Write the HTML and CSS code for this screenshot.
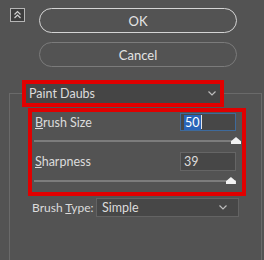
FILE: index.html
```html
<!DOCTYPE html>
<html lang="en">
<head>
  <meta charset="UTF-8">
  <title>Paint Daubs</title>
  <link rel="stylesheet" href="styles.css">
</head>
<body>
  <div class="dialog">
    <div class="top">
      <span class="collapse">
        <svg width="15" height="14" viewBox="0 0 15 14">
          <rect x="0.5" y="0.5" width="14" height="13" fill="#3d3d3d" stroke="#b5b5b5"/>
          <path d="M4.5 6.5 L7.5 3.5 L10.5 6.5 M4.5 10 L7.5 7 L10.5 10" fill="none" stroke="#d0d0d0" stroke-width="1.2"/>
        </svg>
      </span>
      <div class="buttons">
        <button class="btn btn-ok">OK</button>
        <button class="btn">Cancel</button>
      </div>
    </div>

    <div class="group">
      <div class="mark mark-select">
        <div class="select select-filter">
          <span>Paint Daubs</span>
          <svg class="chev" width="8" height="5" viewBox="0 0 8 5"><path d="M0.5 0.5 L4 4 L7.5 0.5" fill="none" stroke="#bdbdbd" stroke-width="1.2"/></svg>
        </div>
      </div>

      <div class="mark mark-params">
        <div class="param">
          <div class="param-row">
            <label><u>B</u>rush Size</label>
            <div class="field field-active"><span class="sel">50</span><span class="caret"></span></div>
          </div>
          <div class="slider"><span class="thumb" style="left: 100%"></span></div>
        </div>
        <div class="param">
          <div class="param-row">
            <label><u>S</u>harpness</label>
            <div class="field">39</div>
          </div>
          <div class="slider"><span class="thumb" style="left: 97.5%"></span></div>
        </div>
      </div>

      <div class="type-row">
        <label>Brush <u>T</u>ype:</label>
        <div class="select select-type">
          <span>Simple</span>
          <svg class="chev" width="8" height="5" viewBox="0 0 8 5"><path d="M0.5 0.5 L4 4 L7.5 0.5" fill="none" stroke="#bdbdbd" stroke-width="1.2"/></svg>
        </div>
      </div>
    </div>
  </div>
</body>
</html>
```

FILE: styles.css
```css
*{padding:0;margin:0;box-sizing:border-box}
body {
  background: #535353;
  font-family: Lato, "Open Sans", sans-serif;
  font-size: 12.5px;
  color: #dcdcdc;
}
label{white-space:nowrap}
.dialog{
  width:264px;
  height:260px;
  overflow:hidden;
  display:flex;
  flex-direction:column;
}
.top{
  display:flex;
  padding-top:8px;
}
.collapse{
  display:block;
  width:15px;
  height:14px;
  margin-left:10px;
}
.collapse svg{display:block}
.buttons{
  display:flex;
  flex-direction:column;
  gap:9px;
  margin-left:14px;
  width:198px;
}
.btn{
  height:25px;
  border-radius:13px;
  border:1px solid #7b7b7b;
  background:transparent;
  color:#e4e4e4;
  font-family:inherit;
  font-size:13px;
}
.btn-ok{
  border:1.5px solid #d4d4d4;
}

/* group frame */
.group{
  flex:1;
  margin:26px 2px 0 9px;
  border:1px solid #6a6a6a;
  border-bottom:none;
}
.mark{
  border:4px solid #e00000;
}
.mark-select{
  width:202px;
  height:27px;
  margin:-14px 0 0 12px;
}
.select{
  display:flex;
  align-items:center;
  justify-content:space-between;
  background:#454545;
}
.select-filter{
  height:19px;
  padding:0 4px 0 3px;
}
.chev{display:block}

.mark-params{
  width:218px;
  height:88px;
  margin:1px 0 0 18px;
}
.param-row{
  display:flex;
  align-items:center;
  justify-content:space-between;
  height:18px;
  margin-top:1px;
  padding:0 6px 0 3px;
}
.param + .param .param-row{
  height:19px;
  margin-top:0;
}
.field{
  width:56px;
  height:100%;
  background:#474747;
  border:1px solid #656565;
  padding:0 3px;
  display:flex;
  align-items:center;
}
.field-active{
  border-color:#3e6a9b;
}
.sel{
  background:#2a64b8;
  color:#fff;
  padding:0 1px;
  line-height:15px;
}
.caret{
  width:1px;
  height:14px;
  background:#e8e8e8;
}
.slider{
  position:relative;
  height:21px;
  margin:0 6px 0 2px;
}
.slider:before{
  content:'';
  position:absolute;
  left:0;
  right:0;
  top:9px;
  height:2px;
  background:#7c7c7c;
}
.thumb{
  position:absolute;
  top:6px;
  width:10px;
  height:7px;
  margin-left:-5px;
  background:#f2f2f2;
  clip-path:polygon(50% 0, 100% 60%, 100% 100%, 0 100%, 0 60%);
}

.type-row{
  display:grid;
  grid-template-columns:64px 143px;
  align-items:center;
  margin:2px 0 0 22px;
  font-size:12px;
}
.select-type{
  height:19px;
  border:1px solid #636363;
  background:#474747;
  padding:0 11px 0 5px;
  font-size:12.5px;
}
```
